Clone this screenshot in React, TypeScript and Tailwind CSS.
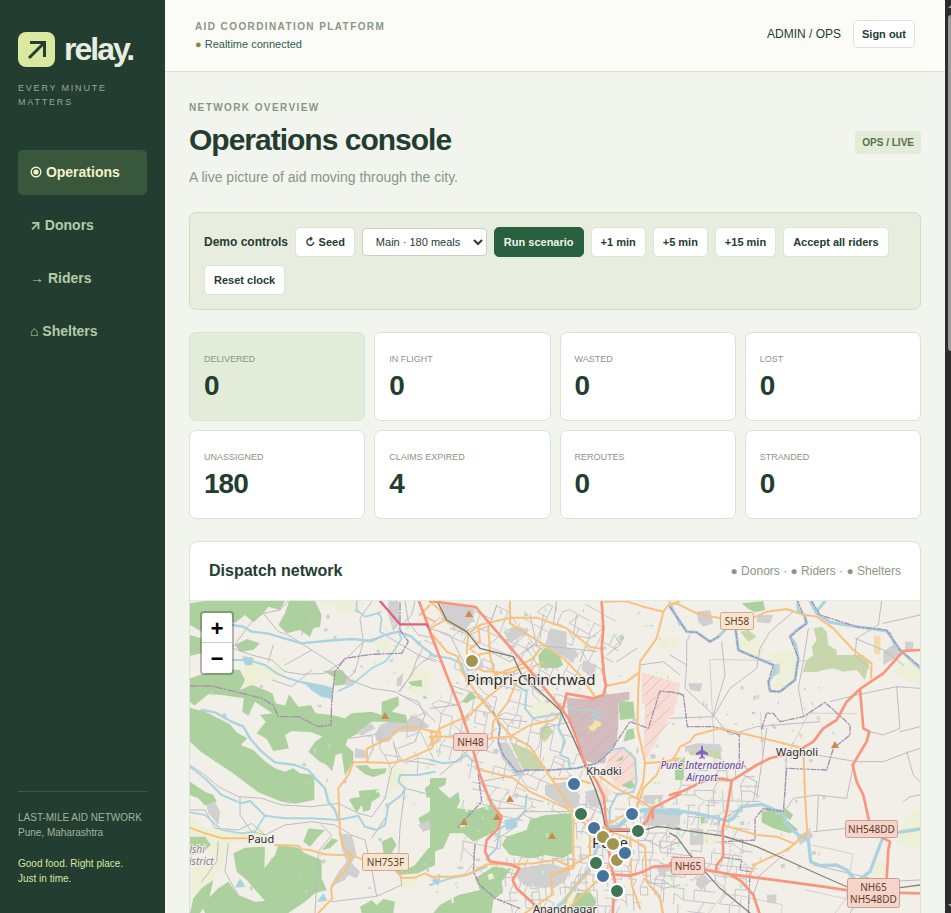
import React from "react";

const LAND = "#f2efe9";
const WOOD = "#add19e";
const SCRUB = "#c8d7ab";
const FARM = "#edf0d6";
const BUILT = "#d0d0d0";
const WATER = "#aad3df";
const MINOR = "#bdbcc0";
const PRIMARY = "#f8c27e";
const TRUNK = "#f8967d";
const BORDER = "#a58fae";

function randomFrom(seed: number) {
  let s = seed;
  return () => {
    s = (s * 1664525 + 1013904223) % 4294967296;
    return s / 4294967296;
  };
}

// Broken, slightly crooked street grid inside an ellipse.
function streetGrid(cx: number, cy: number, rx: number, ry: number, step: number, angle: number, seed: number) {
  const rnd = randomFrom(seed);
  const cos = Math.cos(angle);
  const sin = Math.sin(angle);
  const reach = Math.max(rx, ry);
  const n = Math.ceil(reach / step);
  const at = (i: number, j: number) => {
    const jr = randomFrom((i + 60) * 971 + (j + 60) * 7919 + seed * 31);
    jr();
    const u = i * step + (jr() - 0.5) * step * 0.6;
    const v = j * step + (jr() - 0.5) * step * 0.6;
    return [cx + u * cos - v * sin, cy + u * sin + v * cos];
  };
  const inside = (p: number[]) => ((p[0] - cx) / rx) ** 2 + ((p[1] - cy) / ry) ** 2 < 1;
  let d = "";
  for (let i = -n; i <= n; i++) {
    for (let j = -n; j <= n; j++) {
      const a = at(i, j);
      if (!inside(a)) continue;
      for (const b of [at(i + 1, j), at(i, j + 1)]) {
        if (rnd() < 0.58) d += `M${a[0].toFixed(1)} ${a[1].toFixed(1)}L${b[0].toFixed(1)} ${b[1].toFixed(1)}`;
      }
    }
  }
  return d;
}

// Small irregular plots: parks, ponds, hamlets.
function plots(x: number, y: number, w: number, h: number, count: number, size: number, seed: number) {
  const rnd = randomFrom(seed);
  let d = "";
  for (let i = 0; i < count; i++) {
    const px = x + rnd() * w;
    const py = y + rnd() * h;
    const a = size * (0.4 + rnd());
    const b = size * (0.4 + rnd());
    d += `M${px.toFixed(1)} ${py.toFixed(1)}l${a.toFixed(1)} ${(-b * 0.3).toFixed(1)}l${(a * 0.3).toFixed(1)} ${b.toFixed(1)}l${(-a).toFixed(1)} ${(b * 0.3).toFixed(1)}z`;
  }
  return d;
}

const cityStreets = [
  streetGrid(480, 640, 60, 38, 12, 0.5, 3),
  streetGrid(560, 640, 60, 40, 11, 0.6, 5),
  streetGrid(500, 720, 75, 50, 11, 0.35, 8),
  streetGrid(610, 850, 62, 62, 7, 0.1, 12),
  streetGrid(540, 880, 45, 40, 7, 0.05, 15),
  streetGrid(560, 790, 50, 40, 10, 0.5, 18),
  streetGrid(700, 860, 50, 60, 10, 0.2, 21),
  streetGrid(715, 790, 40, 30, 9, 0.1, 24),
  streetGrid(485, 820, 30, 60, 12, 0.3, 27),
  streetGrid(395, 740, 38, 26, 14, -0.3, 29),
].join("");
const outerLanes = [
  streetGrid(760, 670, 70, 60, 46, 0.1, 44),
  streetGrid(800, 880, 90, 60, 40, 0.3, 47),
].join("");

const pins: [number, number, string][] = [
  [472, 661, "#a3944d"],
  [574, 784, "#46749d"],
  [581, 814, "#3f7653"],
  [632, 814, "#46749d"],
  [594, 828, "#46749d"],
  [638, 831, "#3f7653"],
  [603, 837, "#a3944d"],
  [617, 860, "#a3944d"],
  [613, 844, "#a3944d"],
  [625, 853, "#46749d"],
  [596, 863, "#3f7653"],
  [603, 876, "#46749d"],
  [617, 891, "#3f7653"],
];

const peaks = [[385, 716], [469, 614], [510, 799], [497, 817], [464, 822], [552, 836], [835, 745]];

function Shield({ x, y, w, h = 17, lines, state = false }: { x: number; y: number; w: number; h?: number; lines: string[]; state?: boolean }) {
  return (
    <g>
      <rect x={x + 0.5} y={y + 0.5} width={w} height={h} rx="2" fill={state ? "#f7e5d0" : "#f4d4cb"} stroke={state ? "#d3a78a" : "#cf9d90"} />
      {lines.map((line, i) => (
        <text key={line} x={x + w / 2 + 0.5} y={y + 13 + i * 12} textAnchor="middle" fontSize="10" fill={state ? "#5f4322" : "#6a3a24"}>
          {line}
        </text>
      ))}
    </g>
  );
}

function WestTerrain() {
  return (
    <g transform="translate(185 535) scale(0.33333)" fill="none" strokeLinejoin="round" strokeLinecap="round">
      <g fill={FARM}>
        <path d="M400 198H540L515 230L470 240L440 215z" />
        <path d="M180 360L225 385L310 400L300 425L330 430L240 435L180 465L165 440L180 405z" />
        <path d="M290 370L305 365L300 395z" />
        <path d="M670 390L740 410L725 460L735 480L680 475L670 440z" />
        <path d="M560 320L610 318L620 350L590 355z" />
        <path d="M15 840L60 880L110 885L150 895L210 885L240 870L235 940L255 950L240 1005L225 960L190 920L130 925L110 1000L95 1020L70 950L15 930z" />
        <path d="M600 700L660 700L655 760L610 765z" />
        <path d="M25 1000L75 960L90 1030L60 1060L15 1085z" />
        <path d="M640 1030L700 1035L680 1065L645 1060z" />
        <path d="M420 405L475 405L490 425L440 440z" />
      </g>
      <g fill={WOOD}>
        <path d="M60 198H300L285 225L250 215L235 235L205 262L180 240L150 264L110 250L50 290L15 270V205z" />
        <path d="M312 198H390L410 240L405 275L385 280L375 306L345 285L305 295L280 270L300 235z" />
        <path d="M150 330L185 312L225 325L205 345L165 350z" />
        <path d="M15 300L50 310V355L15 362z" />
        <path d="M15 430C60 412 120 398 165 405L180 435L165 465L200 450L235 463L262 475L272 505L300 512L312 478L340 515L378 510L392 535L440 540L480 550L500 535L560 530L590 540V500L640 484L642 510L620 530L663 540L670 575L600 560H560L520 595L488 612L482 630L505 650V680L480 722L470 655L452 660L442 708L425 690L405 680L370 650L390 620L412 605L380 592L320 588L300 600L312 640L265 648L245 612L215 595L242 560L225 540L262 535L210 500L190 542L172 530L176 490L110 480L70 478L28 512L15 500z" />
        <path d="M15 518L60 530L100 550L135 568L155 592L187 610L168 630L205 645L242 680L270 700L300 710L325 700L345 715L388 720V795L330 806L290 800L220 772L180 742L140 712L80 672L48 650L15 620z" />
        <path d="M415 408L470 405L488 425L485 448L450 452L445 425z" />
        <path d="M510 692L545 690L560 702L605 700L600 715L565 726L540 718z" />
        <path d="M500 790L525 785L520 768L580 762L585 785L560 800L555 825L535 830L530 810L515 833L492 795z" />
        <path d="M15 740L60 770L85 780L95 800L60 812L40 790L15 780z" />
        <path d="M145 955L180 938L240 935L238 1000L270 960L280 930L340 938L360 955L410 975V1030L425 1065L390 1075L360 1100L310 1134H60L50 1110L100 1060L130 1040L160 1080L210 1100L240 1098L185 1035L155 1010z" />
        <path d="M50 1060L85 1035L70 1100L45 1134H15L25 1090z" />
        <path d="M355 920L370 880L420 885L400 905L375 935z" />
        <path d="M410 945L440 910L460 915L435 940z" />
        <path d="M15 905L60 905L78 930L50 955L15 960z" />
        <path d="M590 920L620 905L635 930L610 970L650 1010L690 990L730 940L750 930V990L700 1015L640 1020L600 980z" />
        <path d="M525 1115L560 1095L575 1110L595 1092L630 1100L625 1134H530z" />
        <path d="M720 760L750 735V780L725 790z" />
        <path d="M700 850L750 820V850L715 890z" />
        <path d="M670 440L710 435L712 455L680 452z" />
      </g>
      <g fill={BUILT}>
        <path d="M570 600L585 570L610 560L665 565L680 540L705 550L735 575L690 590L640 590L610 620L575 620z" />
        <path d="M610 198H640L645 260L625 290L610 240z" />
        <path d="M510 640L540 645L545 670L510 668z" />
        <path d="M515 590L560 565L570 580L530 602z" />
        <path d="M465 895L500 900L515 960L500 985L525 1010L515 1030L490 1020L480 1035L435 1055L460 1010L485 980L470 940z" />
        <path d="M65 810L90 800L105 830L100 870L70 835z" />
        <path d="M700 870L745 850L750 880L715 890z" />
        <path d="M635 430L655 415L650 450L635 455z" />
        <path d="M485 430L510 435L500 448L480 452z" />
        <path d={plots(40, 220, 690, 880, 35, 9, 77)} />
      </g>
      <path fill="#d7f2c5" d={plots(560, 200, 180, 900, 30, 9, 88)} />
      <g stroke={MINOR} strokeWidth="3">
        <path d="M145 335L200 260L235 235L285 225L310 198M235 235L280 290L310 300L380 345L450 390L495 435L560 460L630 470L700 510L750 560" />
        <path d="M265 330L250 380M350 300L380 200M145 340L200 360L260 375L300 410L350 418L420 415L480 375L535 320L525 250L560 200" />
        <path d="M262 435L320 455L380 405M380 345L300 390M535 320L510 410L490 430L440 420M540 320L600 300L700 360L750 380" />
        <path d="M15 690L60 720L100 755L160 785L230 790L290 810L380 815L460 805L520 835L560 845L600 790L620 700L640 680L625 620" />
        <path d="M165 785V840L200 890L240 900M15 825L60 825L90 880L160 885L200 865L240 900M240 900L300 870L380 860L450 870L500 900L540 915L560 1000L575 1084L440 1100M575 1084L650 1050L640 980L645 880L660 760" />
        <path d="M100 920L95 980L50 1040M130 925L120 1010L165 1090M495 610L560 600L565 640L545 680M640 675L690 680L750 690M660 760L720 775M600 850L560 910" />
        <path d="M410 870L440 900L400 950L390 1134M645 480L700 500L720 540M645 470L690 400L740 360" />
        <path d="M660 198L670 260L700 300L750 310M690 198L680 240L640 280M590 230L560 240M700 360L680 420L640 470M720 540L690 620L640 640" />
      </g>
      <g stroke={WATER}>
        <path strokeWidth="7" d="M140 270L175 275L200 290L250 296L280 305L350 325L420 318L500 312L560 318L600 300L640 290L680 305L700 325L750 365" />
        <path strokeWidth="5" d="M515 198V225L540 245L580 235L590 250L585 290L600 300M640 290L650 310L625 350L600 380L560 400L530 425L500 450L460 468" />
        <path strokeWidth="6" d="M145 375H190L240 390L275 415L310 430L360 445" />
        <path fill={WATER} strokeWidth="2" d="M355 440L410 450L445 460L438 490L410 485L380 465z" />
        <path fill={WATER} strokeWidth="2" d="M175 365L205 370L200 390L180 388z" />
        <path strokeWidth="7" d="M50 525L90 532L140 560L175 575L195 610L230 650L270 682L330 690L370 705L400 740L420 760L430 800L450 825L460 855" />
        <path strokeWidth="6" d="M15 695L60 730L110 780L170 805L195 798L240 842L300 850L380 850L460 855L520 842L540 875L575 885L600 870L610 810L650 780L660 760L640 740L645 720L700 720L750 710" />
        <path strokeWidth="5" d="M240 842L210 890L170 895L110 885L60 840L15 832" />
        <path fill={WATER} stroke="none" d="M165 1030L182 1055L150 1058zM415 1075L428 1098L395 1100zM715 480L730 490L715 492zM340 1018H355L345 1025z" />
      </g>
      <path stroke={BORDER} strokeWidth="4" strokeDasharray="22 6 4 6" d="M15 453H80L150 470L230 490L265 510L280 545L340 545L400 575L438 570L440 500L450 410L480 370L560 358L650 355L670 320L645 285V198" />
      <g stroke={PRIMARY} strokeWidth="6">
        <path d="M15 878L60 895L110 910L190 910M270 930L340 932L350 943L375 945L420 958L500 962L540 975L600 985L632 1005L650 1028L690 1028L720 1015L750 1030" />
        <path d="M750 590L680 575L640 582L610 610L545 642L548 682H505L490 720L460 760L465 900L475 935L500 962L485 1000L455 1035L438 1060L442 1090L400 1134" />
        <path d="M548 682L620 684L660 675L740 640L750 620M740 590V620M720 245L750 260M705 240L735 210" />
      </g>
      <path stroke={TRUNK} strokeWidth="8" d="M702 198L752 335" />
      <path stroke="#e0607f" strokeWidth="7" d="M585 198L645 268H725L735 285" />
    </g>
  );
}

function CityTerrain() {
  return (
    <g transform="translate(430 595) scale(0.33333)" fill="none" strokeLinejoin="round" strokeLinecap="round">
      <g fill={FARM}>
        <path d="M305 325L380 310L385 345L320 370z" />
        <path d="M400 900L440 890L430 940L400 954z" />
        <path d="M680 130L720 125L715 160L690 160z" />
      </g>
      <g fill={BUILT}>
        <path d="M30 25L135 40L130 75L100 110L50 85L40 50z" />
        <path d="M360 100L410 110V160L440 165L430 205L385 175L345 150z" />
        <path d="M220 110L255 92L300 105L240 145z" />
        <path d="M460 195L500 210L490 250L455 225z" />
        <path d="M265 820L360 805L420 825L400 870L340 880L280 870L260 845z" />
        <path d="M345 570L410 560L450 600L445 640L410 640L345 600z" />
        <path d="M200 440L235 445L285 540L265 545L215 490z" />
        <path d="M640 600L700 600L690 630L640 625z" />
        <path d="M640 640L750 640V690L640 690z" />
        <path d="M680 820L725 810L720 840L690 840z" />
        <path d="M100 190L150 185L160 220L110 230zM270 250L340 300L370 320L330 300z" />
        <path d="M465 590L510 580L520 630L480 640z" />
        <path d={plots(10, 30, 720, 900, 60, 12, 101)} />
      </g>
      <g fill={WOOD}>
        <path d="M0 550L50 548L45 570L25 580L60 610L85 590L90 620L80 640L130 645L180 630L215 670L205 700L175 720L130 740L100 715H60L40 760L0 775z" />
        <path d="M215 750L230 725L290 705L300 675L345 660L425 655L428 770L400 790L345 780L310 790L240 780z" />
        <path d="M325 180L345 158L385 175L400 210L380 220L330 218z" />
        <path d="M135 850L190 815L245 820L215 860L220 890L190 915L185 954H10L30 930L85 900L150 885z" />
        <path d="M565 318L610 320L615 370L570 375z" />
        <path d="M580 440L590 405L610 400L615 430z" />
        <path d="M440 895L480 890L500 920L480 954H415z" />
        <path d="M95 320L120 290L140 305L110 325z" />
      </g>
      <path fill={SCRUB} d="M330 400L350 385L370 410L345 440L328 425zM240 440L300 465L350 520L280 525z" />
      <path fill="#c2efcf" d={plots(10, 30, 720, 900, 80, 8, 107)} />
      <path fill={WATER} d={plots(10, 30, 720, 900, 40, 5, 109)} />
      <path fill="#eef0cf" d={plots(10, 30, 720, 900, 50, 12, 113)} />
      <path fill="#d2bcbe" d="M410 310L490 312L520 300L598 290V315L565 320V390L560 440L530 480L525 505L490 505L460 495L445 430L415 370z" />
      <path fill="#f6dcd3" d="M635 232L750 265L735 340L700 400L650 490L640 490L645 330L635 320z" />
      <path fill="#f6dcd3" d="M540 470L570 458L605 470L620 500L615 580L560 575L525 520z" />
      <path fill="#f6dcd3" d="M500 550L545 590L520 625L500 600z" />
      <g stroke="#e2a6a4" strokeWidth="2">
        <path d="M420 375L490 313M432 400L530 302M445 430L575 300M452 460L565 350M462 490L563 400M490 503L558 440" />
        <path d="M637 275L670 243M645 300L695 250M645 335L725 262M645 370L745 275M645 410L740 320M645 455L720 380" />
        <path d="M535 500L575 462M545 530L605 473M555 555L617 500M580 575L617 545" />
      </g>
      <path fill={WOOD} d="M575 570L605 555L615 575L600 583zM555 500L580 480L578 495z" />
      <path fill="#f5e3a0" d="M475 395L488 388L495 375L510 380L515 390L500 398L492 408L478 405z" />
      <path stroke={WATER} strokeWidth="5" d="M410 335L440 345L480 345L505 355M480 365L515 350M490 375L520 360" />
      <g stroke={WATER} strokeWidth="6">
        <path d="M0 180L60 190L95 205L105 240L150 265L190 255M0 495L40 505L80 500L110 480L130 500" />
        <path d="M250 265L290 290L285 340L310 370L395 355M395 355L385 400L405 440L390 480L415 490L420 520" />
        <path d="M190 350L210 395L205 440L220 480L260 540L290 525L360 525L440 520L500 505L540 465L580 458L615 490L620 560L610 590L560 600L540 640L538 690" />
        <path strokeWidth="13" d="M538 698L565 695L600 660L640 645L690 650L750 655" />
        <path strokeWidth="10" d="M538 700L500 760L480 820L440 870L400 920L370 945" />
        <path d="M290 600L285 650L250 680L210 700L200 760L170 790M0 870L60 850L110 840L170 815" />
        <path fill={WATER} strokeWidth="2" d="M225 675L255 672L262 695L230 705zM5 855L30 850L25 870z" />
        <path d="M718 18L750 90" />
      </g>
      <path stroke={BORDER} strokeWidth="4" strokeDasharray="16 6 4 6" d="M190 350L210 395L205 440L220 480L260 530L290 525L360 525L440 520L500 505L545 465L560 440L600 380L655 400L690 288L750 295M145 540L155 620L80 700M135 750L130 830L150 870L195 910L270 940" />
      <g stroke={MINOR} strokeWidth="3">
        <path d="M60 100L120 120L180 90L200 30M340 60L330 130L290 170M440 60L430 120L480 130L520 100M380 18L370 90M450 200L480 120M530 180L570 150L580 125L550 160" />
        <path d="M300 60L320 150M180 170L240 200L310 150L420 160L500 170M60 270L150 300L200 370L290 380M0 340L80 330L130 300M30 540L110 470L200 400M280 640L200 640L150 560L260 540M420 380L340 400L330 490M530 300L520 250M630 210L700 200L750 240M620 160L560 200M0 100L60 120L100 200" />
        <path d="M160 680L100 690L85 680M190 740L250 700L280 650L420 650M260 600L340 620M640 730L700 760L750 740M640 850L700 880L750 870M650 860L690 900L700 954" />
      </g>
      <g stroke={PRIMARY} strokeWidth="6">
        <path d="M0 100L45 75L75 90L115 115L150 90L240 68L320 68L410 100L480 155L520 163M0 110L50 170L85 185L95 230L150 310L240 420L300 455L350 530L430 650L480 680L535 705" />
        <path d="M45 75L30 45L0 20M175 95L180 180L195 240L260 215L310 190L330 160M240 18L240 85L320 135L400 190L450 240L495 305M115 115L110 170L120 210L160 228L235 235L290 215" />
        <path d="M145 95L150 140L120 160L140 180L190 170M0 410H30V430L5 450M0 425L100 425L180 430L240 425L300 390L370 375L398 348M0 450L30 400L120 360L170 310L225 265M185 430L190 380L235 320L260 260M155 525L250 550L300 590L410 640L430 655" />
        <path d="M525 20L585 18L640 35L700 50L680 130L630 200L625 280L622 400L645 500L640 560L620 610M530 272L590 260L628 232M700 50L715 30L750 18M370 552L430 550L480 565M645 505L700 500L750 490M510 545L560 580L620 610L665 640" />
        <path d="M345 200L310 215L300 235M430 655V820L365 840V900L285 954M0 845L60 845L110 840L170 808L260 808L310 805L380 795L410 810M425 650L480 700L480 780L430 810L370 840M480 830L420 890L400 940M540 710L600 730L645 755L650 860L690 910L698 954M600 730L605 870L630 940M540 800L520 840L400 954M530 690L620 640L640 580L680 540L700 490" />
      </g>
      <path stroke="#77776f" strokeWidth="4" d="M25 25L50 75L110 110L150 160L250 185L275 240L390 345L430 430L465 510L495 580L515 640L525 690L540 708L625 710L680 695L750 700" />
      <g stroke={TRUNK} strokeWidth="8">
        <path d="M0 18L137 36L290 215L398 346L418 375L440 430L460 495L500 560L522 605L526 660L532 702L620 704L650 680L668 640L705 620L750 597" />
        <path d="M515 18L520 100L515 160L522 240L528 270L520 300L490 310L410 296L398 346" />
        <path d="M0 110L50 240L90 340L120 430L150 540L185 630L215 665L205 700L170 735L165 770L180 800L240 808L268 820L248 855L260 880L315 930L345 954" />
        <path d="M545 838L600 842L640 830L670 815L750 812M548 954L555 860L540 800L535 710M668 640V670" />
      </g>
    </g>
  );
}

function EastTerrain() {
  return (
    <g transform="translate(670 535) scale(0.33333)" fill="none" strokeLinejoin="round" strokeLinecap="round">
      <g fill={FARM}>
        <path d="M205 315L260 310L280 340L275 375L240 360L205 345z" />
        <path d="M290 360L330 345L385 350L380 420L350 460L330 470L310 455L330 400z" />
        <path d="M670 410L720 370L750 390V450L710 435z" />
        <path d="M700 860L730 820L750 835V940L680 930z" />
        <path d="M610 980L645 975L650 1025H600z" />
        <path d="M0 300L25 310L20 335L0 340zM100 900L145 905L130 930L100 925z" />
      </g>
      <g fill={SCRUB}>
        <path d="M430 280L455 275L470 290L475 330L500 345L500 360L580 360L598 385L585 435L560 405L520 410L490 400L460 405L440 412L398 410L410 375L430 360L425 335L440 315z" />
        <path d="M210 290L235 285L260 305L235 320z" />
        <path d="M50 640L100 630L150 640L155 675L120 665L60 660z" />
      </g>
      <g fill={WOOD}>
        <path d="M215 205L280 198L285 225L255 232L235 222z" />
        <path d="M275 830L290 820L335 825L345 850L385 885L360 895L310 880L275 862z" />
        <path d="M340 815L370 840L360 855L345 845z" />
        <path d="M15 690L45 665L40 735L15 735z" />
        <path d="M92 845H103V865H92z" />
      </g>
      <g fill={BUILT}>
        <path d="M80 230L120 225L130 265L100 275L85 260z" />
        <path d="M260 240L310 240L300 265L262 262z" />
        <path d="M305 390L330 385L328 415L310 425z" />
        <path d="M60 880L100 882V930H60zM80 1030L100 1015L122 1040L95 1065L78 1050z" />
        <path d="M55 445L98 445L90 470L60 465zM640 350L680 320L690 360L640 390zM705 320L730 320L730 345H705z" />
        <path d="M380 905L420 885L430 905L390 930zM0 845L18 840V880H0z" />
        <path d="M290 1080L320 1078L318 1105L292 1103z" />
        <path d="M40 635L80 625L150 628L158 650L120 645L60 650z" />
        <path d={plots(20, 480, 440, 600, 40, 9, 131)} />
      </g>
      <path fill="#c2efcf" d={plots(0, 780, 240, 340, 35, 8, 133)} />
      <path fill={WATER} d={plots(180, 450, 320, 180, 14, 7, 137)} />
      <path fill="#f8d9ae" d="M612 300L632 305L630 360L612 355zM380 590L400 598L392 612zM440 545L455 550L445 560z" />
      <path fill="#f6dcd3" d="M0 438L28 448L10 540H0z" />
      <g stroke={MINOR} strokeWidth="3">
        <path d="M0 360L50 390L45 460L120 530L180 600L260 575L380 565L450 560M50 390L50 320L60 300M155 320L165 420L130 540M370 230L300 290L270 340L260 400L180 460L130 545L0 550M415 280L400 380L385 460L400 540" />
        <path d="M635 198L625 270L560 310L555 360L600 400M750 240L640 265M555 310L640 345L700 390M480 500L560 480L680 455L750 460M680 455L690 580L640 600L600 590M690 590L750 575M440 660L560 680L640 680L720 650L750 640M550 690L530 790L440 780L370 790L350 820M710 650L730 720L750 740M445 785L440 890M750 780L720 785L700 800M430 890L530 880" />
        <path d="M290 580L260 790M350 640L345 780M220 720L260 740L250 800M350 950L420 880M250 1080L270 1020L340 960M130 870L240 800M430 990L560 1020L640 1040L750 1035M540 1134L560 1105L600 1110" />
      </g>
      <g stroke={WATER}>
        <path strokeWidth="9" d="M0 215L50 290L80 292L120 320L145 305L165 285M197 285L205 345L250 365L310 390L315 410L295 440L300 468L330 470L375 435L385 370L375 325L360 305L380 285L410 265L405 240L385 230L383 198M420 198L440 235L480 262L560 275L650 288L690 345L750 400M465 198L440 230" />
        <path strokeWidth="10" d="M0 825L80 835L175 858L190 850L215 815L275 808L340 835L350 870L385 900L415 915L422 980L450 992L500 990L530 1005L560 1040L600 1010L630 930L640 905L680 893L750 882" />
        <path strokeWidth="8" d="M660 295L672 325L690 345M565 1040L550 1060" />
      </g>
      <path stroke={BORDER} strokeWidth="4" strokeDasharray="16 6 4 6" d="M0 215L50 290L80 292L120 320L145 305M197 285L205 345L250 365L310 390L295 440L300 468L330 470L375 435L385 370L360 305L410 265L383 198M425 198L450 240L560 275L650 285L690 345L750 395M0 470L40 480L52 575L130 575L208 600V680L230 700M275 580L290 535L310 535L330 560L400 545L465 502L540 570V600L490 640L470 705L350 700L340 830L280 820L255 850V915L165 920M165 968L215 975L210 1005L240 1010L235 1134" />
      <g stroke={PRIMARY} strokeWidth="6">
        <path d="M0 210L20 205L80 235L150 250M250 248L290 230L350 222L395 238L440 245L490 280L550 345L605 385L603 430M0 680L15 665L30 635L60 620L75 600L150 580L260 605L400 640" />
        <path d="M400 640L405 780L412 895L390 910L370 930L340 950L255 988L240 1020M165 872L260 900L320 905L370 925" />
      </g>
      <path stroke="#85857c" strokeWidth="4" d="M0 880L70 890L160 903L260 935L350 975L450 1020L560 1068M0 895L20 905L60 960L150 1060L240 1134M690 1058L750 1050" />
      <g stroke={TRUNK} strokeWidth="8">
        <path d="M0 780L40 768L80 748L110 735L155 731L185 737L170 830L158 880L160 965L140 990L138 1010M0 985L100 1003L180 1018L300 1033L460 1055L560 1070L750 1075M180 1018L215 1040L250 1080L268 1134" />
        <path d="M185 737L260 690L300 670L380 650L430 620L460 580L500 555L530 500L570 462L640 415L700 348L750 345M570 462L580 580L598 590L590 620L548 690L560 740L580 780L600 870M630 905L660 920L655 945L650 1030" />
      </g>
    </g>
  );
}

function DispatchMap() {
  return (
    <svg className="block h-[400px] w-full" viewBox="190 601 730 400" preserveAspectRatio="xMidYMin slice" role="img" aria-label="Map of Pune" fontFamily="'Noto Sans', sans-serif">
      <rect x="0" y="400" width="1400" height="800" fill={LAND} />
      <path d={outerLanes} fill="none" stroke="#d3d1d2" strokeWidth="1" />
      <WestTerrain />
      <path d={cityStreets} fill="none" stroke="#c6c5ca" strokeWidth="1" />
      <CityTerrain />
      <EastTerrain />
      {peaks.map(([x, y]) => (
        <path key={`${x}-${y}`} d={`M${x} ${y - 4}l4 7h-8z`} fill="#cb8c4a" />
      ))}
      <g transform="translate(702 752)" fill="#8461c4">
        <path d="M-1 -5Q0 -8 1 -5V-2L6 1V3L1 2V4.500L3 6V7L0 6L-3 7V6L-1 4.500V2L-6 3V1L-1 -2z" />
      </g>
      <g fill="#2b2b2b" stroke={LAND} strokeWidth="2" strokeLinejoin="round" paintOrder="stroke" textAnchor="middle">
        <text x="531" y="685" fontSize="15">Pimpri-Chinchwad</text>
        <text x="610" y="848" fontSize="15">Pune</text>
        <g fontSize="11">
          <text x="604" y="775">Khadki</text>
          <text x="797" y="756">Wagholi</text>
          <text x="261" y="843">Paud</text>
          <text x="565" y="913">Anandnagar</text>
        </g>
        <g fontSize="10" fontStyle="italic" fill="#5b42a5">
          <text x="702" y="769">Pune International</text>
          <text x="702" y="781">Airport</text>
        </g>
        <g fontSize="10" fontStyle="italic" fill="#8c7c92">
          <text x="190" y="853">Mulshi</text>
          <text x="198" y="865">District</text>
        </g>
      </g>
      <Shield x={720} y={612} w={33} lines={["SH58"]} state />
      <Shield x={453} y={733} w={34} lines={["NH48"]} />
      <Shield x={362} y={853} w={46} lines={["NH753F"]} state />
      <Shield x={671} y={857} w={33} lines={["NH65"]} />
      <Shield x={845} y={820} w={52} lines={["NH548DD"]} />
      <Shield x={847} y={878} w={52} h={29} lines={["NH65", "NH548DD"]} />
      {pins.map(([x, y, color]) => (
        <circle key={`${x}-${y}`} cx={x} cy={y} r="7" fill={color} stroke="#fff" strokeWidth="2" />
      ))}
    </svg>
  );
}

function LiveIcon() {
  return (
    <svg viewBox="0 0 12 12" className="mb-[2px] inline-block h-3 w-3" fill="none" stroke="currentColor" aria-hidden="true">
      <circle cx="6" cy="6" r="4.800" strokeWidth="1.400" />
      <circle cx="6" cy="6" r="2.600" fill="currentColor" stroke="none" />
    </svg>
  );
}

const navItems: [React.ReactNode, string][] = [
  [<LiveIcon />, "Operations"],
  ["↗", "Donors"],
  ["→", "Riders"],
  ["⌂", "Shelters"],
];

function Sidebar() {
  return (
    <aside className="flex w-[165px] shrink-0 flex-col bg-[#233d30] px-[18px] pt-8 pb-[27px]">
      <div className="flex items-center gap-[9px]">
        <span className="flex h-[35px] w-[37px] items-center justify-center rounded-lg bg-[#dae99f]">
          <svg viewBox="0 0 20 20" className="h-5 w-5" fill="none" stroke="currentColor" strokeWidth="3" aria-hidden="true">
            <path d="M3 2.500H17.500V17" />
            <path d="M17 3L2 18" />
          </svg>
        </span>
        <span className="text-[32px] leading-[35px] font-bold tracking-[-2px] text-[#e8eedf]">relay.</span>
      </div>
      <p className="mt-[14px] text-[9px] leading-[14px] tracking-[0.2em] text-[#98aa93]">EVERY MINUTE MATTERS</p>
      <nav className="mt-[41px] flex flex-col gap-2">
        {navItems.map(([icon, label], i) => (
          <a key={label} href={`#${label.toLowerCase()}`} className={`block h-[45px] rounded-[5px] px-3 text-sm leading-[44px] font-bold ${i === 0 ? "bg-[#39573a] text-[#f6f1c9]" : "text-[#b5cba6]"}`}>
            {icon} {label}
          </a>
        ))}
      </nav>
      <div className="mt-auto border-t border-[#3c5942] pt-[18px] text-[10px] leading-[15px] text-[#a3b39c]">
        <p>LAST-MILE AID NETWORK<br />Pune, Maharashtra</p>
        <p className="mt-4 text-[#dbe5a3]">Good food. Right place.<br />Just in time.</p>
      </div>
    </aside>
  );
}

function DemoButton({ children, primary = false }: { children: React.ReactNode; primary?: boolean }) {
  return (
    <button type="button" className={`h-[30px] rounded-[5px] border px-[9px] text-[11px] font-bold ${primary ? "border-[#286040] bg-[#286040] text-[#f1f5e8]" : "border-[#dce4d6] bg-white text-[#233d30]"}`}>
      {children}
    </button>
  );
}

const stats: [string, number][] = [
  ["DELIVERED", 0],
  ["IN FLIGHT", 0],
  ["WASTED", 0],
  ["LOST", 0],
  ["UNASSIGNED", 180],
  ["CLAIMS EXPIRED", 4],
  ["REROUTES", 0],
  ["STRANDED", 0],
];

export default function App() {
  return (
    <div className="flex h-screen overflow-hidden bg-[#f2f5ee] font-['Liberation_Sans',Inter,sans-serif] text-[#233d30]">
      <Sidebar />
      <div className="flex min-w-0 flex-1 flex-col">
        <header className="flex h-[72px] shrink-0 items-start justify-between border-b border-[#dae2d5] bg-[#fbfcf7] px-[30px] pt-5">
          <div>
            <p className="text-[10px] leading-[13px] font-bold tracking-[0.14em] text-[#879782]">AID COORDINATION PLATFORM</p>
            <p className="mt-[3px] text-[11px] leading-[17px] text-[#2f5d4c]"><span className="text-[#7d8a45]">●</span> Realtime connected</p>
          </div>
          <div className="flex items-center gap-3">
            <span className="text-xs">ADMIN / OPS</span>
            <button type="button" className="h-7 rounded-[5px] border border-[#dce4d6] bg-white px-2 text-[11px] font-bold">Sign out</button>
          </div>
        </header>
        <main className="min-h-0 flex-1 overflow-hidden px-6 pt-7">
          <div className="flex items-center justify-between">
            <div>
              <p className="text-[10px] leading-[15px] font-bold tracking-[0.14em] text-[#879782]">NETWORK OVERVIEW</p>
              <h1 className="mt-2 text-[30px] leading-[34px] font-bold tracking-[-1px]">Operations console</h1>
              <p className="mt-3 text-sm leading-[16px] text-[#879782]">A live picture of aid moving through the city.</p>
            </div>
            <span className="rounded bg-[#e3ecd8] px-[7px] text-[10px] leading-[23px] font-bold text-[#587047]">OPS / LIVE</span>
          </div>
          <section className="mt-[27px] flex flex-wrap items-center gap-x-[7px] gap-y-2 rounded-[7px] border border-[#d0ddc1] bg-[#e8eedf] p-[14px]">
            <strong className="text-xs">Demo controls</strong>
            <DemoButton>↻ Seed</DemoButton>
            <select aria-label="Scenario" className="h-7 w-[125px] rounded border border-[#c6d2bc] bg-white px-[9px] text-[11px]">
              <option>Main · 180 meals</option>
            </select>
            <DemoButton primary>Run scenario</DemoButton>
            <DemoButton>+1 min</DemoButton>
            <DemoButton>+5 min</DemoButton>
            <DemoButton>+15 min</DemoButton>
            <DemoButton>Accept all riders</DemoButton>
            <DemoButton>Reset clock</DemoButton>
          </section>
          <section className="mt-[22px] grid grid-cols-4 gap-[9px]">
            {stats.map(([label, value], i) => (
              <div key={label} className={`h-[89px] rounded-[7px] border border-[#dae2d5] px-[14px] pt-5 ${i === 0 ? "bg-[#e3ecd8]" : "bg-white"}`}>
                <p className="text-[9px] leading-[12px] text-[#879782]">{label}</p>
                <p className="mt-[5px] text-[28px] leading-[32px] font-bold tracking-[-1px]">{value}</p>
              </div>
            ))}
          </section>
          <section className="mt-[22px] overflow-hidden rounded-[9px] border border-[#dae2d5] bg-white">
            <div className="flex h-[59px] items-center justify-between border-b border-[#e6ebe0] px-[19px]">
              <h2 className="text-base font-bold">Dispatch network</h2>
              <p className="text-xs text-[#879782]">● Donors · ● Riders · ● Shelters</p>
            </div>
            <div className="relative">
              <DispatchMap />
              <div className="absolute top-[10px] left-[10px] flex flex-col overflow-hidden rounded border-2 border-black/25 bg-white bg-clip-padding font-['Liberation_Mono',monospace] text-[22px] font-bold text-black">
                <button type="button" aria-label="Zoom in" className="h-[30px] w-[30px] border-b border-[#ccc] leading-[36px]">+</button>
                <button type="button" aria-label="Zoom out" className="h-[30px] w-[30px] leading-[36px]">−</button>
              </div>
            </div>
          </section>
        </main>
      </div>
      <div className="flex w-[6px] shrink-0 flex-col bg-[#2c2c2c] pl-[3px]" aria-hidden="true">
        <svg viewBox="0 0 3 15" className="h-[15px] w-[3px] shrink-0" fill="#9b9b9b"><path d="M0 8L3 5V8z" /></svg>
        <div className="h-[336px] rounded-l-[3px] bg-[#9b9b9b]" />
        <svg viewBox="0 0 3 15" className="mt-auto h-[15px] w-[3px] shrink-0" fill="#9b9b9b"><path d="M0 6H3V9z" /></svg>
      </div>
    </div>
  );
}
